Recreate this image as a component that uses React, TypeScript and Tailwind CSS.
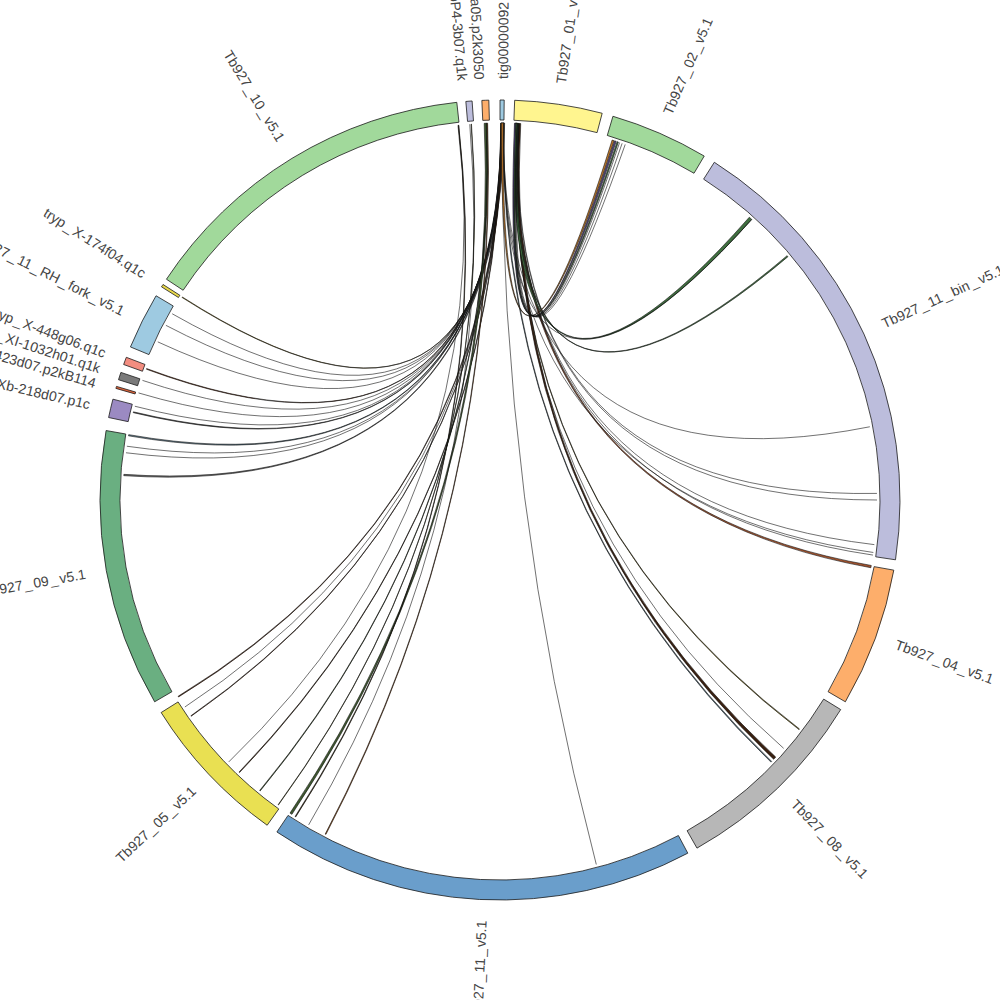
import { Fragment } from "react";

const CX = 500;
const CY = 500;
const R_OUT = 400;
const R_IN = 380;
const R_LINK = 377;
const R_LABEL = 421;

function pt(deg: number, r: number): [number, number] {
  const a = (deg * Math.PI) / 180;
  return [CX + r * Math.sin(a), CY - r * Math.cos(a)];
}

function f(n: number) {
  return n.toFixed(2);
}

function sectorPath(a0: number, a1: number) {
  const [x0, y0] = pt(a0, R_OUT);
  const [x1, y1] = pt(a1, R_OUT);
  const [x2, y2] = pt(a1, R_IN);
  const [x3, y3] = pt(a0, R_IN);
  const large = a1 - a0 > 180 ? 1 : 0;
  return `M${f(x0)} ${f(y0)} A${R_OUT} ${R_OUT} 0 ${large} 1 ${f(x1)} ${f(y1)} L${f(x2)} ${f(y2)} A${R_IN} ${R_IN} 0 ${large} 0 ${f(x3)} ${f(y3)} Z`;
}

function linkPath(a: number, b: number, w: number) {
  const [ax, ay] = pt(a, R_LINK);
  const [bx, by] = pt(b, R_LINK);
  if (w <= 0) return `M${f(ax)} ${f(ay)} Q${CX} ${CY} ${f(bx)} ${f(by)}`;
  const [ax2, ay2] = pt(a + w, R_LINK);
  const [bx2, by2] = pt(b + w, R_LINK);
  return `M${f(ax)} ${f(ay)} Q${CX} ${CY} ${f(bx2)} ${f(by2)} L${f(bx)} ${f(by)} Q${CX} ${CY} ${f(ax2)} ${f(ay2)} Z`;
}

type Segment = { a0: number; a1: number; color: string };

const SEGMENTS: Segment[] = [
  { a0: 0.0, a1: 0.6, color: "#9ecae1" },
  { a0: 2.1, a1: 14.8, color: "#fff58f" },
  { a0: 16.4, a1: 30.7, color: "#a1d99b" },
  { a0: 32.4, a1: 98.6, color: "#bcbddc" },
  { a0: 100.1, a1: 120.3, color: "#fdae6b" },
  { a0: 121.6, a1: 150.5, color: "#b7b7b7" },
  { a0: 152.0, a1: 213.9, color: "#6a9ecb" },
  { a0: 215.6, a1: 237.9, color: "#e9e052" },
  { a0: 239.7, a1: 280.0, color: "#6aaf81" },
  { a0: 281.9, a1: 284.6, color: "#9b8ac2" },
  { a0: 286.2, a1: 286.5, color: "#e0643a" },
  { a0: 287.5, a1: 288.6, color: "#7a7a7a" },
  { a0: 289.8, a1: 290.9, color: "#f38d80" },
  { a0: 292.5, a1: 300.7, color: "#9ecae1" },
  { a0: 302.2, a1: 302.6, color: "#e8d84a" },
  { a0: 303.5, a1: 353.8, color: "#a1d99b" },
  { a0: 355.1, a1: 356.0, color: "#bcbddc" },
  { a0: 357.4, a1: 358.4, color: "#fdae6b" },
];

type Label = { text: string; a: number };

const LABELS: Label[] = [
  { text: "tig00000092", a: 0.4 },
  { text: "Tb927_01_v5.1", a: 8.3 },
  { text: "Tb927_02_v5.1", a: 23.4 },
  { text: "Tb927_11_bin_v5.1", a: 65.3 },
  { text: "Tb927_04_v5.1", a: 110.0 },
  { text: "Tb927_08_v5.1", a: 135.8 },
  { text: "Tb927_11_v5.1", a: 182.5 },
  { text: "Tb927_05_v5.1", a: 226.7 },
  { text: "Tb927_09_v5.1", a: 259.9 },
  { text: "tryp_Xb-218d07.p1c", a: 283.1 },
  { text: "tryp_X-423d07.p2kB114", a: 286.1 },
  { text: "tryp_XI-1032h01.q1k", a: 288.2 },
  { text: "tryp_X-448g06.q1c", a: 290.4 },
  { text: "Tb927_11_RH_fork_v5.1", a: 296.6 },
  { text: "tryp_X-174f04.q1c", a: 302.4 },
  { text: "Tb927_10_v5.1", a: 328.7 },
  { text: "tryp_XI-bP4-3b07.q1k", a: 354.9 },
  { text: "tryp_X-32a05.p2k3050", a: 357.2 },
];

type Link = { a: number; b: number; w?: number; c?: string };

const LINKS: Link[] = [
  // tig -> small left contigs and Tb927_09
  { a: 0.12, b: 302.5, w: 0.08, c: "#b59b2a" },
  { a: 0.18, b: 299.6 },
  { a: 0.22, b: 297.6 },
  { a: 0.26, b: 294.8 },
  { a: 0.3, b: 290.3, w: 0.1, c: "#8a4a2a" },
  { a: 0.34, b: 288.5 },
  { a: 0.38, b: 286.5 },
  { a: 0.16, b: 284.4 },
  { a: 0.2, b: 283.4, w: 0.12, c: "#6a6a6a" },
  { a: 0.42, b: 279.8, w: 0.18, c: "#5b7b8c" },
  { a: 0.46, b: 278.2 },
  { a: 0.28, b: 277.2 },
  { a: 0.5, b: 273.7, w: 0.2, c: "#777777" },
  // tig -> bottom left
  { a: 0.24, b: 238.5, w: 0.12, c: "#5a2a10" },
  { a: 0.32, b: 236.7 },
  { a: 0.4, b: 235.0, w: 0.08, c: "#5a2a10" },
  { a: 0.14, b: 223.7, w: 0.1, c: "#4a2a10" },
  { a: 357.6, b: 213.5, w: 0.35, c: "#3f5a2f" },
  { a: 358.0, b: 207.5, w: 0.12, c: "#b06020" },
  { a: 353.6, b: 212.8, w: 0.12, c: "#3a2a10" },
  { a: 355.4, b: 210.5 },
  // tig -> Tb927_11 (straight down)
  { a: 0.3, b: 165.2 },
  // Tb927_01 start -> Tb927_08
  { a: 2.4, b: 127.4, w: 0.12, c: "#7a6a10" },
  { a: 2.55, b: 131.2 },
  { a: 2.7, b: 133.0, w: 0.45, c: "#3a2010" },
  { a: 0.45, b: 133.9, w: 0.15, c: "#5b7b8c" },
  // -> Tb927_04 / end of bin
  { a: 2.35, b: 100.0, w: 0.35, c: "#a0522d" },
  { a: 2.5, b: 98.4 },
  { a: 2.6, b: 96.8 },
  { a: 0.36, b: 98.0 },
  { a: 2.8, b: 90.0 },
  { a: 2.9, b: 89.0 },
  { a: 0.5, b: 78.8 },
  // -> bin upper
  { a: 2.3, b: 41.4, w: 0.5, c: "#3f6f3f" },
  { a: 0.52, b: 41.9 },
  { a: 2.45, b: 49.6, w: 0.2, c: "#3f6f3f" },
  // Tb927_02 bundle
  { a: 0.2, b: 17.3, w: 0.3, c: "#c0782a" },
  { a: 2.2, b: 17.7, w: 0.25, c: "#5a4a8a" },
  { a: 2.4, b: 18.1, w: 0.2, c: "#3f6f3f" },
  { a: 2.6, b: 18.5 },
  { a: 2.75, b: 18.9 },
  { a: 2.9, b: 19.4 },
  // thin links down from Tb927_10 end / purple / orange
  { a: 353.7, b: 226.0 },
  { a: 355.6, b: 216.0, w: 0.06, c: "#6a6a20" },
  { a: 357.9, b: 219.5, w: 0.1, c: "#3f5a2f" },
];

// underscores in the original render with a little air on both sides
function LabelText({ text }: { text: string }) {
  const parts = text.split("_");
  return (
    <>
      {parts.map((p, i) => (
        <Fragment key={i}>
          {i > 0 ? <tspan dx={1.6}>_</tspan> : null}
          <tspan dx={i > 0 ? 1.6 : 0}>{p}</tspan>
        </Fragment>
      ))}
    </>
  );
}

export default function App() {
  return (
    <div className="w-[1000px] h-[1000px] bg-white overflow-hidden">
      <svg width="1000" height="1000" viewBox="0 0 1000 1000" className="block">
        <g>
          {LINKS.map((l, i) => {
            const w = l.w ?? 0;
            return (
              <path
                key={i}
                d={linkPath(l.a, l.b, w)}
                fill={w > 0 ? l.c ?? "#333" : "none"}
                stroke="#111"
                strokeWidth={0.6}
                strokeLinejoin="round"
              />
            );
          })}
        </g>
        <g>
          {SEGMENTS.map((s, i) => (
            <path key={i} d={sectorPath(s.a0, s.a1)} fill={s.color} stroke="#1a1a1a" strokeWidth={0.8} />
          ))}
        </g>
        <g fontFamily='"Liberation Sans", Arial, sans-serif' fontSize={14} fill="#444">
          {LABELS.map((l) => {
            const [x, y] = pt(l.a, R_LABEL);
            const right = l.a < 180;
            const rot = right ? l.a - 90 : l.a + 90;
            return (
              <text
                key={l.text}
                x={x}
                y={y}
                textAnchor={right ? "start" : "end"}
                dominantBaseline="central"
                transform={`rotate(${rot} ${f(x)} ${f(y)})`}
              >
                <LabelText text={l.text} />
              </text>
            );
          })}
        </g>
      </svg>
    </div>
  );
}
